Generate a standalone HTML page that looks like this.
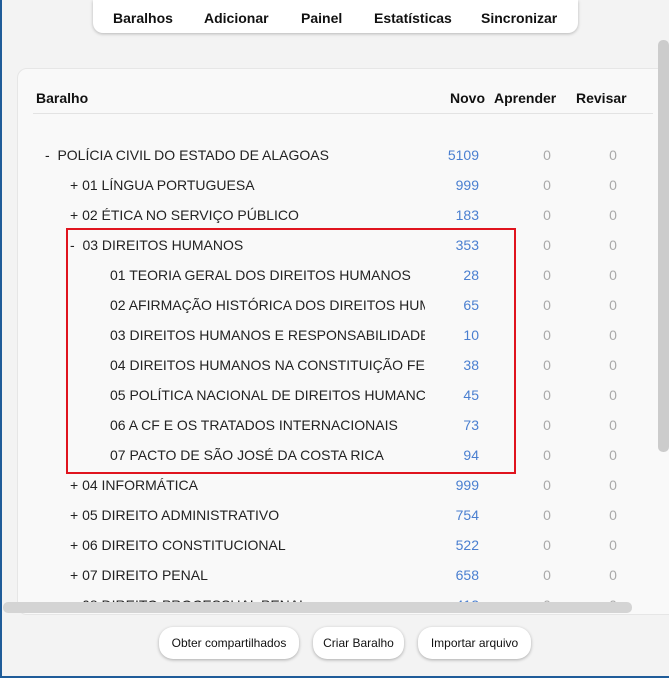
<!DOCTYPE html><html><head><style>
body{margin:0;width:669px;height:678px;overflow:hidden;background:#f3f3f3;font-family:"Liberation Sans",sans-serif;position:relative}
.bl{position:absolute;left:0;top:0;width:2px;height:678px;background:#1f5c99}
.bb{position:absolute;left:0;bottom:0;width:669px;height:2px;background:#1f5c99}
.nav{position:absolute;left:93px;top:0;width:485px;height:33px;background:#fff;border-radius:0 0 10px 10px;box-shadow:0 1px 3px rgba(0,0,0,.25);font-weight:bold;font-size:14px;color:#111}
.nav span{position:absolute;top:10px}
.card{position:absolute;left:17px;top:68px;width:660px;height:545px;background:#f9f9f9;border:1px solid #e6e6e6;border-radius:10px}
.t{position:absolute;font-size:14px;color:#222;white-space:nowrap}
.h{font-weight:bold;color:#111}
.n{color:#4a7fd0;text-align:right;width:40px}
.z{color:#aaa;width:20px;text-align:center}
.line{position:absolute;left:33px;top:113px;width:620px;height:1px;background:#e3e3e3}
.red{position:absolute;left:66px;top:228px;width:446px;height:242px;border:2px solid #e0141e}
.vs{position:absolute;left:658px;top:40px;width:11px;height:412px;background:#ccc;border-radius:5px}
.hs{position:absolute;left:3px;top:602px;width:629px;height:11px;background:#d4d4d4;border-radius:5px}
.btn{position:absolute;top:627px;height:32px;background:#fff;border-radius:14px;box-shadow:0 1px 3px rgba(0,0,0,.3);font-size:12px;color:#111;line-height:33px;text-align:center}
.clip{position:absolute;left:0;top:0;width:669px;height:610px;overflow:hidden}
</style></head><body>
<div class="card"></div>
<div class="nav"><span style="left:20px">Baralhos</span><span style="left:111px">Adicionar</span><span style="left:208px">Painel</span><span style="left:281px">Estatísticas</span><span style="left:388px">Sincronizar</span></div>
<div class="t h" style="left:36px;top:90px">Baralho</div>
<div class="t h" style="left:450px;top:90px">Novo</div>
<div class="t h" style="left:494px;top:90px">Aprender</div>
<div class="t h" style="left:576px;top:90px">Revisar</div>
<div class="line"></div>
<div class="clip" id="c"></div>
<div class="red"></div>
<div class="vs"></div><div class="hs"></div>
<div class="btn" style="left:159px;width:140px">Obter compartilhados</div>
<div class="btn" style="left:313px;width:91px">Criar Baralho</div>
<div class="btn" style="left:418px;width:113px">Importar arquivo</div>
<div class="bl"></div><div class="bb"></div>
<script>
var r=[[45,"-&nbsp; POLÍCIA CIVIL DO ESTADO DE ALAGOAS",5109],[70,"+ 01 LÍNGUA PORTUGUESA",999],[70,"+ 02 ÉTICA NO SERVIÇO PÚBLICO",183],[70,"-&nbsp; 03 DIREITOS HUMANOS",353],[110,"01 TEORIA GERAL DOS DIREITOS HUMANOS",28],[110,"02 AFIRMAÇÃO HISTÓRICA DOS DIREITOS HUM",65],[110,"03 DIREITOS HUMANOS E RESPONSABILIDADE",10],[110,"04 DIREITOS HUMANOS NA CONSTITUIÇÃO FEI",38],[110,"05 POLÍTICA NACIONAL DE DIREITOS HUMANC",45],[110,"06 A CF E OS TRATADOS INTERNACIONAIS",73],[110,"07 PACTO DE SÃO JOSÉ DA COSTA RICA",94],[70,"+ 04 INFORMÁTICA",999],[70,"+ 05 DIREITO ADMINISTRATIVO",754],[70,"+ 06 DIREITO CONSTITUCIONAL",522],[70,"+ 07 DIREITO PENAL",658],[70,"+ 08 DIREITO PROCESSUAL PENAL",412]];
var h="";r.forEach(function(e,i){var y=147+i*30;h+='<div class="t" style="left:'+e[0]+'px;top:'+y+'px;width:'+(425-e[0])+'px;overflow:hidden">'+e[1]+'</div><div class="t n" style="left:439px;top:'+y+'px">'+e[2]+'</div><div class="t z" style="left:537px;top:'+y+'px">0</div><div class="t z" style="left:603px;top:'+y+'px">0</div>';});
document.getElementById("c").innerHTML=h;
</script>
</body></html>
